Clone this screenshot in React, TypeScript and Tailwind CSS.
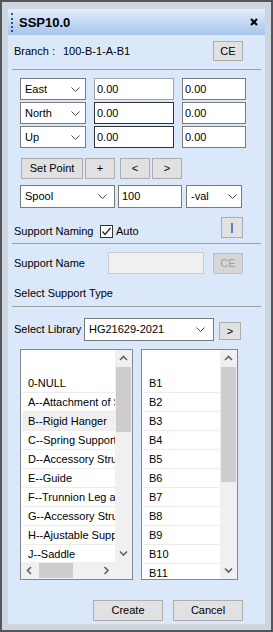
import React from "react";

function Chevron({ className = "" }: { className?: string }) {
  return (
    <svg className={className} width="9" height="5" viewBox="0 0 9 5">
      <polyline points="0.5,0.5 4.5,4.5 8.5,0.5" fill="none" stroke="#444" strokeWidth="1" />
    </svg>
  );
}

function Arrow({ dir }: { dir: "up" | "down" | "left" | "right" }) {
  const pts: Record<string, string> = {
    up: "1,5 4.5,1.5 8,5",
    down: "1,1.5 4.5,5 8,1.5",
    left: "5,1 1.5,4.5 5,8",
    right: "1.5,1 5,4.5 1.5,8",
  };
  const vertical = dir === "up" || dir === "down";
  return (
    <svg width={vertical ? 9 : 7} height={vertical ? 7 : 9} viewBox={vertical ? "0 0 9 7" : "0 0 7 9"}>
      <polyline points={pts[dir]} fill="none" stroke="#606060" strokeWidth="1.6" />
    </svg>
  );
}

function Btn({ className, children }: { className: string; children: React.ReactNode }) {
  return (
    <div className={`flex items-center justify-center bg-[#e1e1e1] border border-[#adadad] ${className}`}>
      {children}
    </div>
  );
}

function Select({ className, label }: { className: string; label: string }) {
  return (
    <div className={`flex items-center justify-between bg-white border border-[#7a7a7a] pl-[4px] ${className}`}>
      <span>{label}</span>
      <Chevron />
    </div>
  );
}

function Input({ className, value }: { className: string; value: string }) {
  return <div className={`flex items-center bg-white border pl-[2px] ${className}`}>{value}</div>;
}

function VScroll({ thumb }: { thumb: string }) {
  return (
    <div className="w-[17px] h-full bg-[#f0f0f0] flex flex-col items-center">
      <div className="h-[17px] w-full flex items-center justify-center">
        <Arrow dir="up" />
      </div>
      <div className={`w-[15px] bg-[#cdcdcd] ${thumb}`} />
      <div className="flex-1" />
      <div className="h-[17px] w-full flex items-center justify-center">
        <Arrow dir="down" />
      </div>
    </div>
  );
}

const leftItems = [
  "0-NULL",
  "A--Attachment of Steel Structure",
  "B--Rigid Hanger",
  "C--Spring Support",
  "D--Accessory Structure",
  "E--Guide",
  "F--Trunnion Leg and Dummy",
  "G--Accessory Structure",
  "H--Ajustable Support",
  "J--Saddle",
];

const rightItems = ["B1", "B2", "B3", "B4", "B5", "B6", "B7", "B8", "B9", "B10", "B11"];

export default function App() {
  return (
    <div className="w-[273px] h-[632px] border-2 border-[#53575c] bg-[#cdd5df] pt-[7px] pl-[6px] pr-[6px] pb-[6px]">
      <div className="h-full flex flex-col bg-[#dbe8fa] text-[11px] leading-[13px] text-black font-['Liberation_Sans',Arial,sans-serif]">
        {/* Title bar */}
        <div className="h-[26px] shrink-0 flex items-center bg-linear-to-b from-[#e4eefb] to-[#a6c4ec]">
          <div className="ml-[3px] h-[19px] border-l-2 border-dotted border-[#34508a]" />
          <span className="ml-[6px] text-[13px] font-bold">SSP10.0</span>
          <svg className="ml-auto mr-[7px]" width="8" height="8" viewBox="0 0 8 8">
            <line x1="1" y1="1" x2="7" y2="7" stroke="#000" strokeWidth="2.2" />
            <line x1="7" y1="1" x2="1" y2="7" stroke="#000" strokeWidth="2.2" />
          </svg>
        </div>

        {/* Branch */}
        <div className="mt-[6px] h-[20px] flex items-center pl-[6px] pr-[22px]">
          <span>Branch :</span>
          <span className="ml-[8px]">100-B-1-A-B1</span>
          <Btn className="ml-auto w-[30px] h-[20px]">CE</Btn>
        </div>

        <div className="mt-[8px] h-px bg-[#a0a0a0] mx-[4px]" />

        {/* Coordinates */}
        <div className="mt-[8px] flex flex-col gap-[2px] pl-[12px]">
          <div className="h-[22px] flex">
            <Select className="w-[66px] pr-[5px]" label="East" />
            <Input className="ml-[8px] w-[80px] border-[#a5a5a5]" value="0.00" />
            <Input className="ml-[8px] w-[64px] border-[#7a7a7a]" value="0.00" />
          </div>
          <div className="h-[22px] flex">
            <Select className="w-[66px] pr-[5px]" label="North" />
            <Input className="ml-[8px] w-[80px] border-[#333333]" value="0.00" />
            <Input className="ml-[8px] w-[64px] border-[#7a7a7a]" value="0.00" />
          </div>
          <div className="h-[22px] flex">
            <Select className="w-[66px] pr-[5px]" label="Up" />
            <Input className="ml-[8px] w-[80px] border-[#333333]" value="0.00" />
            <Input className="ml-[8px] w-[64px] border-[#7a7a7a]" value="0.00" />
          </div>
        </div>

        {/* Set point buttons */}
        <div className="mt-[10px] h-[21px] flex pl-[13px]">
          <Btn className="w-[62px] h-[21px]">Set Point</Btn>
          <Btn className="ml-[2px] w-[30px] h-[21px]">+</Btn>
          <Btn className="ml-[5px] w-[30px] h-[21px]">&lt;</Btn>
          <Btn className="ml-[2px] w-[30px] h-[21px]">&gt;</Btn>
        </div>

        {/* Spool */}
        <div className="mt-[6px] h-[23px] flex pl-[12px]">
          <Select className="w-[95px] pr-[7px]" label="Spool" />
          <Input className="ml-[3px] w-[64px] border-[#7a7a7a] pl-[3px]" value="100" />
          <Select className="ml-[4px] w-[56px] pr-[4px]" label="-val" />
        </div>

        {/* Support naming */}
        <div className="mt-[9px] h-[21px] flex pl-[6px] pr-[22px]">
          <div className="self-end h-[14px] flex items-center">
            <span className="w-[86px]">Support Naming</span>
            <svg width="13" height="13" viewBox="0 0 13 13">
              <rect x="0.5" y="0.5" width="12" height="12" fill="#fff" stroke="#333" />
              <polyline points="2.5,6.5 5,9.5 10.5,3" fill="none" stroke="#222" strokeWidth="1.2" />
            </svg>
            <span className="ml-[3px]">Auto</span>
          </div>
          <Btn className="ml-auto w-[22px] h-[21px]">|</Btn>
        </div>

        <div className="mt-[5px] h-px bg-[#a0a0a0] mx-[4px]" />

        {/* Support name */}
        <div className="mt-[8px] h-[22px] flex items-center pl-[6px]">
          <span className="w-[94px]">Support Name</span>
          <div className="w-[96px] h-[22px] bg-[#f0f0f0] border border-[#cccccc]" />
          <div className="ml-[9px] w-[30px] h-[21px] flex items-center justify-center bg-[#d6d6d6] border border-[#bfbfbf] text-[#a0a0a0]">
            CE
          </div>
        </div>

        <div className="mt-[12px] h-[14px] flex items-center pl-[6px]">Select Support Type</div>

        <div className="mt-[6px] h-px bg-[#a0a0a0] mx-[4px]" />

        {/* Select library */}
        <div className="mt-[11px] h-[23px] flex items-center pl-[6px]">
          <span className="w-[70px]">Select Library</span>
          <Select className="w-[130px] h-[23px] pr-[8px]" label="HG21629-2021" />
          <Btn className="ml-[5px] w-[22px] h-[18px] self-end mb-[1px]">&gt;</Btn>
        </div>

        {/* Lists */}
        <div className="mt-[8px] flex pl-[12px]">
          <div className="w-[113px] h-[231px] border border-[#828790] bg-white flex flex-col">
            <div className="flex h-[212px]">
              <div className="flex-1 overflow-hidden">
                <div className="h-[24px]" />
                {leftItems.map((t, i) => (
                  <div
                    key={t}
                    className={`h-[19px] ml-[1px] pl-[6px] border-b border-[#ececec] whitespace-nowrap flex items-center ${
                      i === 2 ? "bg-[#f0f0f0]" : ""
                    }`}
                  >
                    {t}
                  </div>
                ))}
              </div>
              <VScroll thumb="h-[65px]" />
            </div>
            <div className="h-[17px] flex bg-[#f0f0f0]">
              <div className="w-[17px] flex items-center justify-center">
                <Arrow dir="left" />
              </div>
              <div className="ml-[1px] w-[34px] h-[15px] self-center bg-[#cdcdcd]" />
              <div className="flex-1" />
              <div className="w-[17px] flex items-center justify-center">
                <Arrow dir="right" />
              </div>
              <div className="w-[17px]" />
            </div>
          </div>

          <div className="ml-[8px] w-[97px] h-[231px] border border-[#828790] bg-white flex">
            <div className="flex-1 overflow-hidden">
              <div className="h-[24px]" />
              {rightItems.map((t) => (
                <div key={t} className="h-[19px] ml-[1px] pl-[6px] border-b border-[#ececec] flex items-center">
                  {t}
                </div>
              ))}
            </div>
            <VScroll thumb="h-[115px]" />
          </div>
        </div>

        {/* Bottom buttons */}
        <div className="mt-[20px] h-[21px] flex pl-[85px]">
          <Btn className="w-[70px] h-[21px]">Create</Btn>
          <Btn className="ml-[10px] w-[70px] h-[21px]">Cancel</Btn>
        </div>
      </div>
    </div>
  );
}
